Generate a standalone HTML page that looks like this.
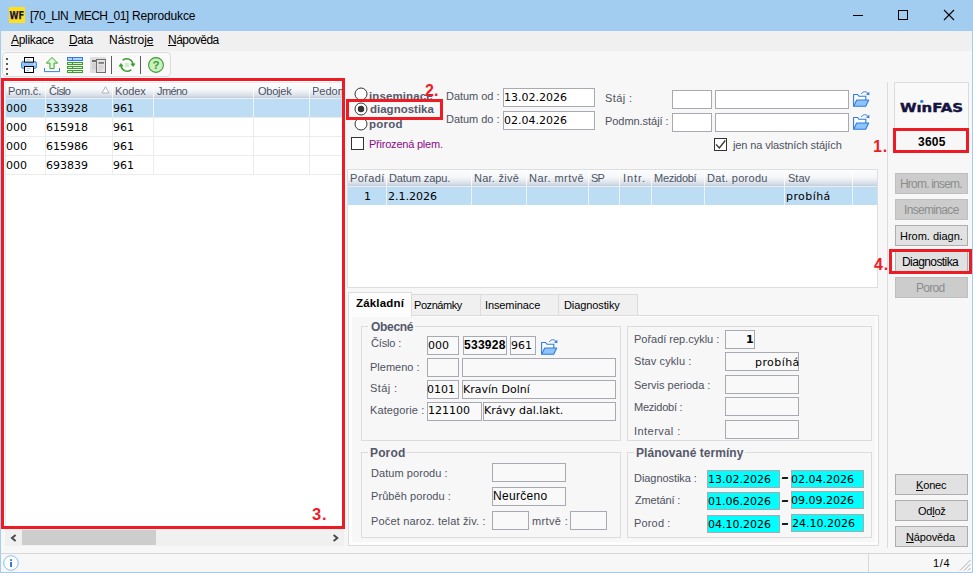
<!DOCTYPE html><html lang="cs"><head><meta charset="utf-8"><title>[70_LIN_MECH_01] Reprodukce</title><style>

html,body{margin:0;padding:0}
body{width:973px;height:573px;overflow:hidden;position:relative;background:#f7f7f7;font-family:"Liberation Sans",sans-serif}
.b{position:absolute;box-sizing:border-box}
.t{position:absolute;white-space:pre;line-height:1}
svg{position:absolute;overflow:visible}
u{text-decoration:underline;text-underline-offset:1px}

</style></head><body>
<div class="b" style="left:0px;top:0px;width:973px;height:31px;background:#a3cdf0;"></div>
<div class="b" style="left:0px;top:31px;width:1px;height:542px;background:#a3cdf0;"></div>
<div class="b" style="left:972px;top:31px;width:1px;height:542px;background:#a3cdf0;"></div>
<div class="b" style="left:0px;top:572px;width:973px;height:1px;background:#a3cdf0;"></div>
<div class="b" style="left:9px;top:7px;width:16px;height:16px;background:#ffe01a;"></div>
<svg style="left:9px;top:7px" width="16" height="16" viewBox="0 0 16 16"><text x="0.6" y="11.9" font-family="DejaVu Sans, Liberation Sans, sans-serif" font-weight="bold" font-size="10.2" fill="#1a1440" stroke="#1a1440" stroke-width="0.25" textLength="14.6" lengthAdjust="spacingAndGlyphs">WF</text></svg>
<span class="t" style="left:30px;top:9px;font:normal 12px 'Liberation Sans', sans-serif;color:#000;letter-spacing:-0.550px;">[70_LIN_MECH_01]</span>
<span class="t" style="left:132px;top:9px;font:normal 12px 'Liberation Sans', sans-serif;color:#000;letter-spacing:-0.140px;">Reprodukce</span>
<svg style="left:850px;top:5px" width="110" height="20" viewBox="850 5 110 20" fill="none" stroke="#000" stroke-width="1"><path d="M853 15.5h10"/><rect x="898.5" y="10.5" width="9" height="9"/><path d="M944 10l10 10M954 10l-10 10" stroke-width="1.1"/></svg>
<div class="b" style="left:1px;top:31px;width:971px;height:20px;background:#f0f0f0;"></div>
<span class="t" style="left:11px;top:33px;font:normal 12px 'Liberation Sans', sans-serif;color:#000;letter-spacing:-0.310px;"><u>A</u>plikace</span>
<span class="t" style="left:69px;top:33px;font:normal 12px 'Liberation Sans', sans-serif;color:#000;letter-spacing:-0.400px;"><u>D</u>ata</span>
<span class="t" style="left:109px;top:33px;font:normal 12px 'Liberation Sans', sans-serif;color:#000;letter-spacing:-0.030px;">Nástroj<u>e</u></span>
<span class="t" style="left:168px;top:33px;font:normal 12px 'Liberation Sans', sans-serif;color:#000;letter-spacing:-0.490px;"><u>N</u>ápověda</span>
<div class="b" style="left:2px;top:52px;width:169px;height:25px;background:#fafafa;border:1px solid #dcdcdc;border-radius:4px;"></div>
<div class="b" style="left:6px;top:58px;width:2px;height:2px;background:#5a5a5a;"></div>
<div class="b" style="left:6px;top:63px;width:2px;height:2px;background:#5a5a5a;"></div>
<div class="b" style="left:6px;top:68px;width:2px;height:2px;background:#5a5a5a;"></div>
<div class="b" style="left:6px;top:73px;width:2px;height:2px;background:#5a5a5a;"></div>
<svg style="left:21px;top:57px" width="16" height="16" viewBox="0 0 16 16">
<rect x="0.5" y="4.5" width="15" height="7" rx="1.8" fill="#8ec1fb" stroke="#3f86e6"/>
<rect x="3.5" y="0.5" width="9" height="4.6" fill="#fff" stroke="#000"/>
<rect x="3.5" y="9.5" width="9" height="6" fill="#fff" stroke="#000"/>
<path d="M5.5 2.8h3.5M5.5 11.7h4M5.5 13.6h2.5" stroke="#8ecbff" stroke-width="1"/>
<rect x="12.6" y="6.5" width="1.6" height="1.6" fill="#e8f3ff"/>
</svg>
<svg style="left:44px;top:57px" width="16" height="16" viewBox="0 0 16 16">
<path d="M8 0.5L13.7 6.1H10.1V11.6H5.9V6.1H2.3Z" fill="#dcf8d5" stroke="#3d9b30" stroke-width="0.95" stroke-linejoin="round"/>
<path d="M0.5 11v3.6h15V11" fill="none" stroke="#3a82dc" stroke-width="1"/>
</svg>
<svg style="left:67px;top:57px" width="16" height="16" viewBox="0 0 16 16">
<rect x="0.5" y="0.5" width="15" height="3" fill="#a9d5ff" stroke="#2f7be0"/>
<rect x="0.5" y="5.5" width="15" height="2" fill="#d9f6d2" stroke="#3d9b30"/>
<rect x="0.5" y="9.5" width="15" height="2" fill="#d9f6d2" stroke="#3d9b30"/>
<rect x="0.5" y="13.5" width="15" height="2" fill="#d9f6d2" stroke="#3d9b30"/>
<path d="M5.5 0.5v3" stroke="#2f7be0"/><path d="M5.5 5.5v2M5.5 9.5v2M5.5 13.5v2" stroke="#3d9b30"/>
</svg>
<svg style="left:90px;top:57px" width="16" height="16" viewBox="0 0 16 16">
<rect x="0" y="0" width="16" height="16" fill="#dedede"/>
<rect x="2" y="3" width="5" height="2" fill="#6e6e6e"/>
<path d="M2 7h4M2 9h4M2 11h4" stroke="#c4c4c4"/>
<rect x="6.5" y="2.5" width="9" height="13" fill="#e4e4e4" stroke="#707070"/>
<rect x="8.5" y="5" width="5.5" height="1.8" fill="#7a7a7a"/>
<path d="M8.5 9h5M8.5 11h5M8.5 13h3" stroke="#c8c8c8"/>
</svg>
<div class="b" style="left:111px;top:56px;width:1px;height:18px;background:#5c5c5c;"></div>
<svg style="left:119px;top:57px" width="16" height="16" viewBox="0 0 16 16" fill="none" stroke="#3d9b30" stroke-width="1.5" stroke-linecap="round">
<path d="M4.2 2.9A6.2 6.2 0 0 1 14 7.6"/>
<path d="M11.8 13.1A6.2 6.2 0 0 1 2 8.4"/>
<path d="M12.2 7.3l1.9 2.2 1.6-2.4z" fill="#3d9b30" stroke-width="0.8"/>
<path d="M3.8 8.7L1.9 6.5 0.3 8.9z" fill="#3d9b30" stroke-width="0.8"/>
<rect x="6" y="6" width="4" height="4" fill="#c9f0c0" stroke="none"/>
</svg>
<div class="b" style="left:140px;top:56px;width:1px;height:18px;background:#5c5c5c;"></div>
<svg style="left:148px;top:57px" width="16" height="16" viewBox="0 0 16 16">
<circle cx="8" cy="8" r="7.4" fill="#c9f0c0" stroke="#3d9b30" stroke-width="1.1"/>
<text x="8" y="12" text-anchor="middle" font-family="Liberation Sans, sans-serif" font-weight="bold" font-size="11.5" fill="#3d9b30">?</text>
</svg>
<div class="b" style="left:1px;top:78px;width:344px;height:451px;background:#ffffff;border:3px solid #ed1c24;"></div>
<div class="b" style="left:5px;top:82px;width:337px;height:1px;background:#e6eaee;"></div>
<div class="b" style="left:5px;top:82px;width:1px;height:444px;background:#e6eaee;"></div>
<div class="b" style="left:6px;top:83px;width:336px;height:15px;background:linear-gradient(#fdfdfe 0%,#f5f7f9 45%,#dce2ea 80%,#c3cedb 100%);"></div>
<div class="b" style="left:6px;top:98px;width:336px;height:1px;background:#e9edf1;"></div>
<div class="b" style="left:6px;top:99px;width:336px;height:18px;background:#bdddf5;"></div>
<div class="b" style="left:6px;top:117px;width:336px;height:1px;background:#ececec;"></div>
<div class="b" style="left:6px;top:136px;width:336px;height:1px;background:#ececec;"></div>
<div class="b" style="left:6px;top:155px;width:336px;height:1px;background:#ececec;"></div>
<div class="b" style="left:6px;top:174px;width:336px;height:1px;background:#ececec;"></div>
<div class="b" style="left:45px;top:83px;width:1px;height:16px;background:rgba(255,255,255,0.75);"></div>
<div class="b" style="left:45px;top:99px;width:1px;height:18px;background:#eaf4fb;"></div>
<div class="b" style="left:45px;top:117px;width:1px;height:58px;background:#ececec;"></div>
<div class="b" style="left:112px;top:83px;width:1px;height:16px;background:rgba(255,255,255,0.75);"></div>
<div class="b" style="left:112px;top:99px;width:1px;height:18px;background:#eaf4fb;"></div>
<div class="b" style="left:112px;top:117px;width:1px;height:58px;background:#ececec;"></div>
<div class="b" style="left:153px;top:83px;width:1px;height:16px;background:rgba(255,255,255,0.75);"></div>
<div class="b" style="left:153px;top:99px;width:1px;height:18px;background:#eaf4fb;"></div>
<div class="b" style="left:153px;top:117px;width:1px;height:58px;background:#ececec;"></div>
<div class="b" style="left:253px;top:83px;width:1px;height:16px;background:rgba(255,255,255,0.75);"></div>
<div class="b" style="left:253px;top:99px;width:1px;height:18px;background:#eaf4fb;"></div>
<div class="b" style="left:253px;top:117px;width:1px;height:58px;background:#ececec;"></div>
<div class="b" style="left:309px;top:83px;width:1px;height:16px;background:rgba(255,255,255,0.75);"></div>
<div class="b" style="left:309px;top:99px;width:1px;height:18px;background:#eaf4fb;"></div>
<div class="b" style="left:309px;top:117px;width:1px;height:58px;background:#ececec;"></div>
<span class="t" style="left:8px;top:85px;font:normal 11px 'Liberation Sans', sans-serif;color:#4a5263;letter-spacing:-0.200px;">Pom.č.</span>
<span class="t" style="left:49px;top:85px;font:normal 11px 'Liberation Sans', sans-serif;color:#4a5263;letter-spacing:-0.800px;">Číslo</span>
<span class="t" style="left:115px;top:85px;font:normal 11px 'Liberation Sans', sans-serif;color:#4a5263;letter-spacing:-0.100px;">Kodex</span>
<span class="t" style="left:157px;top:85px;font:normal 11px 'Liberation Sans', sans-serif;color:#4a5263;letter-spacing:-0.600px;">Jméno</span>
<span class="t" style="left:258px;top:85px;font:normal 11px 'Liberation Sans', sans-serif;color:#4a5263;letter-spacing:-0.240px;">Obojek</span>
<div class="b" style="left:313px;top:82px;width:29px;height:16px;overflow:hidden">
<span class="t" style="left:-1px;top:3px;font:normal 11px 'Liberation Sans', sans-serif;color:#4a5263;">Pedom</span>
</div>
<svg style="left:101px;top:86px" width="9" height="8" viewBox="0 0 9 8"><path d="M1 7L4.5 0.8 8 7Z" fill="#fff" stroke="#9aa3b0" stroke-width="0.8"/></svg>
<span class="t" style="left:6px;top:102px;font:normal 11px 'DejaVu Sans', 'Liberation Sans', sans-serif;color:#000;">000</span>
<span class="t" style="left:46px;top:102px;font:normal 11px 'DejaVu Sans', 'Liberation Sans', sans-serif;color:#000;">533928</span>
<span class="t" style="left:113px;top:102px;font:normal 11px 'DejaVu Sans', 'Liberation Sans', sans-serif;color:#000;">961</span>
<span class="t" style="left:6px;top:121px;font:normal 11px 'DejaVu Sans', 'Liberation Sans', sans-serif;color:#000;">000</span>
<span class="t" style="left:46px;top:121px;font:normal 11px 'DejaVu Sans', 'Liberation Sans', sans-serif;color:#000;">615918</span>
<span class="t" style="left:113px;top:121px;font:normal 11px 'DejaVu Sans', 'Liberation Sans', sans-serif;color:#000;">961</span>
<span class="t" style="left:6px;top:140px;font:normal 11px 'DejaVu Sans', 'Liberation Sans', sans-serif;color:#000;">000</span>
<span class="t" style="left:46px;top:140px;font:normal 11px 'DejaVu Sans', 'Liberation Sans', sans-serif;color:#000;">615986</span>
<span class="t" style="left:113px;top:140px;font:normal 11px 'DejaVu Sans', 'Liberation Sans', sans-serif;color:#000;">961</span>
<span class="t" style="left:6px;top:159px;font:normal 11px 'DejaVu Sans', 'Liberation Sans', sans-serif;color:#000;">000</span>
<span class="t" style="left:46px;top:159px;font:normal 11px 'DejaVu Sans', 'Liberation Sans', sans-serif;color:#000;">693839</span>
<span class="t" style="left:113px;top:159px;font:normal 11px 'DejaVu Sans', 'Liberation Sans', sans-serif;color:#000;">961</span>
<span class="t" style="left:312px;top:505px;font:bold 16.5px 'Liberation Sans', sans-serif;color:#ed1c24;letter-spacing:0.900px;">3.</span>
<div class="b" style="left:5px;top:529px;width:339px;height:17px;background:#f0f0f0;"></div>
<div class="b" style="left:22px;top:530px;width:134px;height:15px;background:#cdcdcd;"></div>
<svg style="left:9.5px;top:532.5px" width="8" height="10" viewBox="0 0 8 10" fill="none" stroke="#484848" stroke-width="1.9"><path d="M5.6 2L1.9 5l3.7 3"/></svg>
<svg style="left:332px;top:532.5px" width="8" height="10" viewBox="0 0 8 10" fill="none" stroke="#484848" stroke-width="1.9"><path d="M1.6 2L5.3 5 1.6 8"/></svg>
<div class="b" style="left:1px;top:553px;width:971px;height:1px;background:#d7d7d7;"></div>
<div class="b" style="left:868px;top:554px;width:1px;height:18px;background:#d7d7d7;"></div>
<svg style="left:3px;top:555px" width="16" height="16" viewBox="0 0 16 16">
<circle cx="8" cy="8" r="7.3" fill="#fbfdff" stroke="#8cc0f2" stroke-width="1"/>
<rect x="7.2" y="7" width="1.7" height="5" fill="#1c63c8"/><rect x="7.2" y="4.2" width="1.7" height="1.7" fill="#1c63c8"/>
</svg>
<span class="t" style="left:933px;top:557px;font:normal 11px 'Liberation Sans', sans-serif;color:#000;letter-spacing:0.700px;">1/4</span>
<svg style="left:959px;top:559px" width="12" height="12" viewBox="0 0 12 12" stroke="#b0b0b0" stroke-width="1"><path d="M11.5 1L1 11.5M11.5 5L5 11.5M11.5 9L9 11.5"/></svg>
<span class="t" style="left:369px;top:90px;font:bold 11.5px 'Liberation Sans', sans-serif;color:#55586a;letter-spacing:0.110px;">inseminace</span>
<span class="t" style="left:369px;top:118px;font:bold 11.5px 'Liberation Sans', sans-serif;color:#55586a;letter-spacing:0.250px;">porod</span>
<svg style="left:353.5px;top:87.3px" width="14" height="14" viewBox="0 0 14 14"><circle cx="7" cy="7" r="6" fill="#fff" stroke="#333" stroke-width="1"/></svg>
<svg style="left:353.5px;top:116.8px" width="14" height="14" viewBox="0 0 14 14"><circle cx="7" cy="7" r="6" fill="#fff" stroke="#333" stroke-width="1"/></svg>
<div class="b" style="left:346px;top:99px;width:97px;height:21px;background:#f7f7f7;border:3px solid #ed1c24;"></div>
<svg style="left:353.5px;top:102.4px" width="14" height="14" viewBox="0 0 14 14"><circle cx="7" cy="7" r="6" fill="#fff" stroke="#333" stroke-width="1"/><circle cx="7" cy="7" r="3.2" fill="#333"/></svg>
<span class="t" style="left:370px;top:103px;font:bold 11.5px 'Liberation Sans', sans-serif;color:#55586a;">diagnostika</span>
<span class="t" style="left:425px;top:82px;font:bold 16px 'Liberation Sans', sans-serif;color:#ed1c24;">2.</span>
<div class="b" style="left:351px;top:137px;width:13px;height:13px;background:#fff;border:1px solid #333;"></div>
<span class="t" style="left:369px;top:138px;font:normal 11px 'Liberation Sans', sans-serif;color:#8a0a8a;letter-spacing:-0.220px;">Přirozená plem.</span>
<span class="t" style="left:446px;top:90px;font:normal 11px 'Liberation Sans', sans-serif;color:#4e5160;letter-spacing:-0.040px;">Datum od :</span>
<span class="t" style="left:446px;top:113px;font:normal 11px 'Liberation Sans', sans-serif;color:#4e5160;letter-spacing:-0.040px;">Datum do :</span>
<div class="b" style="left:503px;top:88px;width:92px;height:19px;background:#fff;border:1px solid #a7aab3;"></div>
<div class="b" style="left:503px;top:111px;width:92px;height:19px;background:#fff;border:1px solid #a7aab3;"></div>
<span class="t" style="left:504px;top:91px;font:normal 11px 'DejaVu Sans', 'Liberation Sans', sans-serif;color:#000;">13.02.2026</span>
<span class="t" style="left:504px;top:114px;font:normal 11px 'DejaVu Sans', 'Liberation Sans', sans-serif;color:#000;">02.04.2026</span>
<span class="t" style="left:605px;top:92px;font:normal 11px 'Liberation Sans', sans-serif;color:#4e5160;letter-spacing:0.400px;">Stáj :</span>
<span class="t" style="left:605px;top:115px;font:normal 11px 'Liberation Sans', sans-serif;color:#4e5160;letter-spacing:-0.050px;">Podmn.stájí :</span>
<div class="b" style="left:672px;top:90px;width:40px;height:19px;background:#fff;border:1px solid #a7aab3;"></div>
<div class="b" style="left:715px;top:90px;width:134px;height:19px;background:#fff;border:1px solid #a7aab3;"></div>
<div class="b" style="left:672px;top:113px;width:40px;height:19px;background:#fff;border:1px solid #a7aab3;"></div>
<div class="b" style="left:715px;top:113px;width:134px;height:19px;background:#fff;border:1px solid #a7aab3;"></div>
<svg style="left:853px;top:91px" width="17" height="16" viewBox="0 0 17 16">
<path d="M0.6 15.2V3.5h4l1.4 1.8h6.8v3.8" fill="#fdfeff" stroke="#2f7be0" stroke-width="1.1" stroke-linejoin="round"/>
<path d="M0.7 15.3L3.7 9h12l-3 6.3z" fill="#8ec4fc" stroke="#2f7be0" stroke-width="1.1" stroke-linejoin="round"/>
<path d="M8.3 3c1.5-2.8 4.8-3 6.6-0.7" fill="none" stroke="#2f7be0" stroke-width="1"/>
<path d="M16.3 0.7v3.6l-3.5-0.9z" fill="#2f7be0"/>
</svg>
<svg style="left:853px;top:114px" width="17" height="16" viewBox="0 0 17 16">
<path d="M0.6 15.2V3.5h4l1.4 1.8h6.8v3.8" fill="#fdfeff" stroke="#2f7be0" stroke-width="1.1" stroke-linejoin="round"/>
<path d="M0.7 15.3L3.7 9h12l-3 6.3z" fill="#8ec4fc" stroke="#2f7be0" stroke-width="1.1" stroke-linejoin="round"/>
<path d="M8.3 3c1.5-2.8 4.8-3 6.6-0.7" fill="none" stroke="#2f7be0" stroke-width="1"/>
<path d="M16.3 0.7v3.6l-3.5-0.9z" fill="#2f7be0"/>
</svg>
<div class="b" style="left:714px;top:138px;width:13px;height:13px;background:#fff;border:1px solid #333;"></div>
<svg style="left:714px;top:138px" width="13" height="13" viewBox="0 0 13 13" fill="none" stroke="#333" stroke-width="1.3"><path d="M2 6.4l3.3 3.5 6-7.4"/></svg>
<span class="t" style="left:733px;top:139px;font:normal 11px 'Liberation Sans', sans-serif;color:#4e5160;letter-spacing:-0.110px;">jen na vlastních stájích</span>
<div class="b" style="left:347px;top:169px;width:531px;height:119px;background:#fff;border:1px solid #dcdee2;"></div>
<div class="b" style="left:348px;top:170px;width:529px;height:16px;background:linear-gradient(#fdfdfe 0%,#f5f7f9 45%,#dce2ea 80%,#c3cedb 100%);"></div>
<div class="b" style="left:348px;top:186px;width:529px;height:1px;background:#e9edf1;"></div>
<div class="b" style="left:348px;top:187px;width:529px;height:18px;background:#bdddf5;"></div>
<div class="b" style="left:386px;top:170px;width:1px;height:17px;background:rgba(255,255,255,0.75);"></div>
<div class="b" style="left:386px;top:187px;width:1px;height:18px;background:#eaf4fb;"></div>
<div class="b" style="left:471px;top:170px;width:1px;height:17px;background:rgba(255,255,255,0.75);"></div>
<div class="b" style="left:471px;top:187px;width:1px;height:18px;background:#eaf4fb;"></div>
<div class="b" style="left:526px;top:170px;width:1px;height:17px;background:rgba(255,255,255,0.75);"></div>
<div class="b" style="left:526px;top:187px;width:1px;height:18px;background:#eaf4fb;"></div>
<div class="b" style="left:588px;top:170px;width:1px;height:17px;background:rgba(255,255,255,0.75);"></div>
<div class="b" style="left:588px;top:187px;width:1px;height:18px;background:#eaf4fb;"></div>
<div class="b" style="left:619px;top:170px;width:1px;height:17px;background:rgba(255,255,255,0.75);"></div>
<div class="b" style="left:619px;top:187px;width:1px;height:18px;background:#eaf4fb;"></div>
<div class="b" style="left:651px;top:170px;width:1px;height:17px;background:rgba(255,255,255,0.75);"></div>
<div class="b" style="left:651px;top:187px;width:1px;height:18px;background:#eaf4fb;"></div>
<div class="b" style="left:704px;top:170px;width:1px;height:17px;background:rgba(255,255,255,0.75);"></div>
<div class="b" style="left:704px;top:187px;width:1px;height:18px;background:#eaf4fb;"></div>
<div class="b" style="left:784px;top:170px;width:1px;height:17px;background:rgba(255,255,255,0.75);"></div>
<div class="b" style="left:784px;top:187px;width:1px;height:18px;background:#eaf4fb;"></div>
<div class="b" style="left:852px;top:170px;width:1px;height:17px;background:rgba(255,255,255,0.75);"></div>
<div class="b" style="left:852px;top:187px;width:1px;height:18px;background:#eaf4fb;"></div>
<div class="b" style="left:348px;top:170px;width:38px;height:16px;overflow:hidden">
<span class="t" style="left:2px;top:2px;font:normal 11px 'Liberation Sans', sans-serif;color:#4a5263;letter-spacing:0.400px;">Pořadí</span>
</div>
<span class="t" style="left:389px;top:172px;font:normal 11px 'Liberation Sans', sans-serif;color:#4a5263;letter-spacing:-0.100px;">Datum zapu.</span>
<span class="t" style="left:474px;top:172px;font:normal 11px 'Liberation Sans', sans-serif;color:#4a5263;letter-spacing:0.250px;">Nar. živě</span>
<span class="t" style="left:529px;top:172px;font:normal 11px 'Liberation Sans', sans-serif;color:#4a5263;letter-spacing:0.440px;">Nar. mrtvě</span>
<span class="t" style="left:591px;top:172px;font:normal 11px 'Liberation Sans', sans-serif;color:#4a5263;letter-spacing:-0.800px;">SP</span>
<span class="t" style="left:623px;top:172px;font:normal 11px 'Liberation Sans', sans-serif;color:#4a5263;letter-spacing:0.900px;">Intr.</span>
<span class="t" style="left:654px;top:172px;font:normal 11px 'Liberation Sans', sans-serif;color:#4a5263;letter-spacing:-0.280px;">Mezidobí</span>
<span class="t" style="left:707px;top:172px;font:normal 11px 'Liberation Sans', sans-serif;color:#4a5263;letter-spacing:0.300px;">Dat. porodu</span>
<span class="t" style="left:788px;top:172px;font:normal 11px 'Liberation Sans', sans-serif;color:#4a5263;">Stav</span>
<span class="t" style="left:364px;top:190px;font:normal 11px 'DejaVu Sans', 'Liberation Sans', sans-serif;color:#000;">1</span>
<span class="t" style="left:388px;top:190px;font:normal 11px 'DejaVu Sans', 'Liberation Sans', sans-serif;color:#000;">2.1.2026</span>
<span class="t" style="left:786px;top:190px;font:normal 11px 'DejaVu Sans', 'Liberation Sans', sans-serif;color:#000;letter-spacing:0.430px;">probíhá</span>
<div class="b" style="left:348px;top:315px;width:531px;height:231px;background:#fdfdfd;border:1px solid #dcdcdc;"></div>
<div class="b" style="left:352px;top:317px;width:523px;height:225px;background:#f7f7f7;"></div>
<div class="b" style="left:411px;top:294px;width:227px;height:22px;background:#f0f0f0;border:1px solid #dcdcdc;"></div>
<div class="b" style="left:480px;top:295px;width:1px;height:20px;background:#dcdcdc;"></div>
<div class="b" style="left:558px;top:295px;width:1px;height:20px;background:#dcdcdc;"></div>
<div class="b" style="left:348px;top:292px;width:64px;height:25px;background:#fdfdfd;border:1px solid #dcdcdc;border-bottom:none;"></div>
<span class="t" style="left:356px;top:297px;font:bold 11.5px 'Liberation Sans', sans-serif;color:#000;letter-spacing:0.170px;">Základní</span>
<span class="t" style="left:414px;top:299px;font:normal 11px 'Liberation Sans', sans-serif;color:#000;letter-spacing:-0.430px;">Poznámky</span>
<span class="t" style="left:485px;top:299px;font:normal 11px 'Liberation Sans', sans-serif;color:#000;letter-spacing:-0.110px;">Inseminace</span>
<span class="t" style="left:564px;top:299px;font:normal 11px 'Liberation Sans', sans-serif;color:#000;letter-spacing:-0.100px;">Diagnostiky</span>
<div class="b" style="left:361px;top:326px;width:260px;height:115px;border:1px solid #dcdcdc;"></div>
<div class="b" style="left:368px;top:324px;width:47.2px;height:5px;background:#f7f7f7;"></div>
<span class="t" style="left:371px;top:320px;font:bold 12px 'Liberation Sans', sans-serif;color:#55586a;letter-spacing:-0.320px;">Obecné</span>
<span class="t" style="left:371px;top:337px;font:normal 11px 'Liberation Sans', sans-serif;color:#4e5160;letter-spacing:-0.160px;">Číslo :</span>
<span class="t" style="left:370px;top:361px;font:normal 11px 'Liberation Sans', sans-serif;color:#4e5160;">Plemeno :</span>
<span class="t" style="left:370px;top:382px;font:normal 11px 'Liberation Sans', sans-serif;color:#4e5160;letter-spacing:0.400px;">Stáj :</span>
<span class="t" style="left:370px;top:404px;font:normal 11px 'Liberation Sans', sans-serif;color:#4e5160;letter-spacing:0.100px;">Kategorie :</span>
<div class="b" style="left:427px;top:336px;width:32px;height:19px;background:#f9f9f9;border:1px solid #a7aab3;"></div>
<div class="b" style="left:463px;top:336px;width:44px;height:19px;background:#f9f9f9;border:1px solid #a7aab3;"></div>
<div class="b" style="left:510px;top:336px;width:26px;height:19px;background:#f9f9f9;border:1px solid #a7aab3;"></div>
<span class="t" style="left:428px;top:339px;font:normal 11px 'DejaVu Sans', 'Liberation Sans', sans-serif;color:#000;">000</span>
<span class="t" style="left:464px;top:338px;font:bold 12px 'Liberation Sans', sans-serif;color:#000;letter-spacing:0.280px;">533928</span>
<span class="t" style="left:511px;top:339px;font:normal 11px 'DejaVu Sans', 'Liberation Sans', sans-serif;color:#000;">961</span>
<svg style="left:540.5px;top:338.5px" width="17" height="16" viewBox="0 0 17 16">
<path d="M0.6 15.2V3.5h4l1.4 1.8h6.8v3.8" fill="#fdfeff" stroke="#2f7be0" stroke-width="1.1" stroke-linejoin="round"/>
<path d="M0.7 15.3L3.7 9h12l-3 6.3z" fill="#8ec4fc" stroke="#2f7be0" stroke-width="1.1" stroke-linejoin="round"/>
<path d="M8.3 3c1.5-2.8 4.8-3 6.6-0.7" fill="none" stroke="#2f7be0" stroke-width="1"/>
<path d="M16.3 0.7v3.6l-3.5-0.9z" fill="#2f7be0"/>
</svg>
<div class="b" style="left:427px;top:358px;width:32px;height:19px;background:#f9f9f9;border:1px solid #a7aab3;"></div>
<div class="b" style="left:462px;top:358px;width:154px;height:19px;background:#f9f9f9;border:1px solid #a7aab3;"></div>
<div class="b" style="left:427px;top:380px;width:32px;height:19px;background:#f9f9f9;border:1px solid #a7aab3;"></div>
<div class="b" style="left:462px;top:380px;width:154px;height:19px;background:#f9f9f9;border:1px solid #a7aab3;"></div>
<span class="t" style="left:427px;top:383px;font:normal 11px 'DejaVu Sans', 'Liberation Sans', sans-serif;color:#000;">0101</span>
<span class="t" style="left:463px;top:383px;font:normal 11px 'DejaVu Sans', 'Liberation Sans', sans-serif;color:#000;">Kravín Dolní</span>
<div class="b" style="left:427px;top:402px;width:55px;height:19px;background:#f9f9f9;border:1px solid #a7aab3;"></div>
<div class="b" style="left:483px;top:402px;width:133px;height:19px;background:#f9f9f9;border:1px solid #a7aab3;"></div>
<span class="t" style="left:428px;top:404px;font:normal 11px 'DejaVu Sans', 'Liberation Sans', sans-serif;color:#000;">121100</span>
<span class="t" style="left:484px;top:404px;font:normal 11px 'DejaVu Sans', 'Liberation Sans', sans-serif;color:#000;">Krávy dal.lakt.</span>
<div class="b" style="left:627px;top:326px;width:245px;height:115px;border:1px solid #dcdcdc;"></div>
<span class="t" style="left:634px;top:333px;font:normal 11px 'Liberation Sans', sans-serif;color:#4e5160;letter-spacing:-0.020px;">Pořadí rep.cyklu :</span>
<span class="t" style="left:634px;top:355px;font:normal 11px 'Liberation Sans', sans-serif;color:#4e5160;letter-spacing:0.100px;">Stav cyklu :</span>
<span class="t" style="left:634px;top:379px;font:normal 11px 'Liberation Sans', sans-serif;color:#4e5160;">Servis perioda :</span>
<span class="t" style="left:634px;top:401px;font:normal 11px 'Liberation Sans', sans-serif;color:#4e5160;letter-spacing:-0.230px;">Mezidobí :</span>
<span class="t" style="left:634px;top:425px;font:normal 11px 'Liberation Sans', sans-serif;color:#4e5160;letter-spacing:0.450px;">Interval :</span>
<div class="b" style="left:725px;top:330px;width:30px;height:19px;background:#f9f9f9;border:1px solid #a7aab3;"></div>
<div class="b" style="left:725px;top:352px;width:74px;height:19px;background:#f9f9f9;border:1px solid #a7aab3;"></div>
<div class="b" style="left:725px;top:375px;width:74px;height:19px;background:#f9f9f9;border:1px solid #a7aab3;"></div>
<div class="b" style="left:725px;top:397px;width:74px;height:19px;background:#f9f9f9;border:1px solid #a7aab3;"></div>
<div class="b" style="left:725px;top:420px;width:74px;height:19px;background:#f9f9f9;border:1px solid #a7aab3;"></div>
<span class="t" style="left:746px;top:333px;font:bold 11px 'DejaVu Sans', 'Liberation Sans', sans-serif;color:#000;">1</span>
<span class="t" style="left:755px;top:356px;font:normal 11px 'DejaVu Sans', 'Liberation Sans', sans-serif;color:#000;letter-spacing:0.430px;">probíhá</span>
<div class="b" style="left:361px;top:452px;width:260px;height:86px;border:1px solid #dcdcdc;"></div>
<div class="b" style="left:368px;top:450px;width:38.3px;height:5px;background:#f7f7f7;"></div>
<span class="t" style="left:370px;top:446px;font:bold 12px 'Liberation Sans', sans-serif;color:#55586a;letter-spacing:0.140px;">Porod</span>
<span class="t" style="left:371px;top:467px;font:normal 11px 'Liberation Sans', sans-serif;color:#4e5160;letter-spacing:0.060px;">Datum porodu :</span>
<span class="t" style="left:371px;top:490px;font:normal 11px 'Liberation Sans', sans-serif;color:#4e5160;letter-spacing:0.070px;">Průběh porodu :</span>
<span class="t" style="left:371px;top:515px;font:normal 11px 'Liberation Sans', sans-serif;color:#4e5160;letter-spacing:0.170px;">Počet naroz. telat živ. :</span>
<div class="b" style="left:492px;top:463px;width:74px;height:19px;background:#f9f9f9;border:1px solid #a7aab3;"></div>
<div class="b" style="left:492px;top:487px;width:74px;height:19px;background:#f9f9f9;border:1px solid #a7aab3;"></div>
<span class="t" style="left:493px;top:489px;font:normal 12px 'Liberation Sans', sans-serif;color:#000;letter-spacing:0.320px;">Neurčeno</span>
<div class="b" style="left:492px;top:511px;width:37px;height:19px;background:#f9f9f9;border:1px solid #a7aab3;"></div>
<span class="t" style="left:532px;top:515px;font:normal 11px 'Liberation Sans', sans-serif;color:#4e5160;letter-spacing:0.360px;">mrtvě :</span>
<div class="b" style="left:570px;top:511px;width:37px;height:19px;background:#f9f9f9;border:1px solid #a7aab3;"></div>
<div class="b" style="left:627px;top:452px;width:245px;height:86px;border:1px solid #dcdcdc;"></div>
<div class="b" style="left:634px;top:450px;width:111.3px;height:5px;background:#f7f7f7;"></div>
<span class="t" style="left:636px;top:446px;font:bold 12px 'Liberation Sans', sans-serif;color:#55586a;letter-spacing:0.040px;">Plánované termíny</span>
<span class="t" style="left:634px;top:472px;font:normal 11px 'Liberation Sans', sans-serif;color:#4e5160;letter-spacing:-0.060px;">Diagnostika :</span>
<span class="t" style="left:635px;top:494px;font:normal 11px 'Liberation Sans', sans-serif;color:#4e5160;letter-spacing:-0.130px;">Zmetání :</span>
<span class="t" style="left:634px;top:517px;font:normal 11px 'Liberation Sans', sans-serif;color:#4e5160;letter-spacing:0.160px;">Porod :</span>
<div class="b" style="left:707px;top:470px;width:73px;height:18px;background:#00ffff;border:1px solid #b0a8a8;"></div>
<div class="b" style="left:791px;top:470px;width:73px;height:18px;background:#00ffff;border:1px solid #b0a8a8;"></div>
<div class="b" style="left:707px;top:492px;width:73px;height:18px;background:#00ffff;border:1px solid #b0a8a8;"></div>
<div class="b" style="left:791px;top:491px;width:73px;height:18px;background:#00ffff;border:1px solid #b0a8a8;"></div>
<div class="b" style="left:707px;top:515px;width:73px;height:18px;background:#00ffff;border:1px solid #b0a8a8;"></div>
<div class="b" style="left:791px;top:514px;width:73px;height:18px;background:#00ffff;border:1px solid #b0a8a8;"></div>
<span class="t" style="left:708px;top:473px;font:normal 11px 'DejaVu Sans', 'Liberation Sans', sans-serif;color:#000;">13.02.2026</span>
<span class="t" style="left:791px;top:473px;font:normal 11px 'DejaVu Sans', 'Liberation Sans', sans-serif;color:#000;">02.04.2026</span>
<span class="t" style="left:708px;top:495px;font:normal 11px 'DejaVu Sans', 'Liberation Sans', sans-serif;color:#000;">01.06.2026</span>
<span class="t" style="left:791px;top:494px;font:normal 11px 'DejaVu Sans', 'Liberation Sans', sans-serif;color:#000;">09.09.2026</span>
<span class="t" style="left:708px;top:518px;font:normal 11px 'DejaVu Sans', 'Liberation Sans', sans-serif;color:#000;">04.10.2026</span>
<span class="t" style="left:792px;top:517px;font:normal 11px 'DejaVu Sans', 'Liberation Sans', sans-serif;color:#000;">24.10.2026</span>
<div class="b" style="left:782px;top:477px;width:6px;height:2px;background:#1c1c1c;transform:skewX(-15deg);"></div>
<div class="b" style="left:782px;top:500px;width:6px;height:2px;background:#1c1c1c;transform:skewX(-15deg);"></div>
<div class="b" style="left:782px;top:523px;width:6px;height:2px;background:#1c1c1c;transform:skewX(-15deg);"></div>
<div class="b" style="left:887px;top:82px;width:1px;height:466px;background:#dcdcdc;"></div>
<div class="b" style="left:894px;top:82px;width:75px;height:60px;background:#f9f9f9;border:1px solid #dcdcdc;"></div>
<svg style="left:899px;top:98px" width="66" height="17" viewBox="0 0 66 17"><text x="0.9" y="13.6" font-family="DejaVu Sans, Liberation Sans, sans-serif" font-weight="bold" font-size="13" fill="#15133f" stroke="#15133f" stroke-width="0.45" textLength="63.2" lengthAdjust="spacingAndGlyphs">WınFAS</text><circle cx="22.8" cy="3.4" r="1.7" fill="#2f86e0"/></svg>
<div class="b" style="left:893px;top:128px;width:76px;height:25px;background:#f7f7f7;border:3px solid #ed1c24;"></div>
<span class="t" style="left:918px;top:135px;font:bold 12px 'Liberation Sans', sans-serif;color:#000;letter-spacing:0.260px;">3605</span>
<span class="t" style="left:873px;top:138px;font:bold 16px 'Liberation Sans', sans-serif;color:#ed1c24;letter-spacing:0.800px;">1.</span>
<div class="b" style="left:895px;top:173px;width:73px;height:21px;background:#cccccc;border:1px solid #bfbfbf;"></div>
<span class="t" style="left:900px;top:177px;font:normal 12px 'Liberation Sans', sans-serif;color:#8c8c8c;letter-spacing:-0.800px;">Hrom. insem.</span>
<div class="b" style="left:895px;top:199px;width:73px;height:21px;background:#cccccc;border:1px solid #bfbfbf;"></div>
<span class="t" style="left:904px;top:203px;font:normal 12px 'Liberation Sans', sans-serif;color:#8c8c8c;letter-spacing:-0.670px;">Inseminace</span>
<div class="b" style="left:895px;top:225px;width:73px;height:21px;background:#e1e1e1;border:1px solid #adadad;"></div>
<span class="t" style="left:900px;top:230px;font:normal 11px 'Liberation Sans', sans-serif;color:#000;letter-spacing:-0.010px;">Hrom. diagn.</span>
<div class="b" style="left:895px;top:251px;width:73px;height:21px;background:#e1e1e1;border:1px solid #adadad;"></div>
<span class="t" style="left:902px;top:255px;font:normal 12px 'Liberation Sans', sans-serif;color:#000;letter-spacing:-0.600px;">Diagnostika</span>
<div class="b" style="left:889px;top:249px;width:83px;height:25px;border:3px solid #ed1c24;"></div>
<div class="b" style="left:895px;top:277px;width:73px;height:21px;background:#cccccc;border:1px solid #bfbfbf;"></div>
<span class="t" style="left:916px;top:281px;font:normal 12px 'Liberation Sans', sans-serif;color:#8c8c8c;letter-spacing:-0.700px;">Porod</span>
<span class="t" style="left:874px;top:256px;font:bold 16px 'Liberation Sans', sans-serif;color:#ed1c24;letter-spacing:0.900px;">4.</span>
<div class="b" style="left:895px;top:474px;width:73px;height:21px;background:#e1e1e1;border:1px solid #adadad;"></div>
<span class="t" style="left:916px;top:479px;font:normal 11px 'Liberation Sans', sans-serif;color:#000;letter-spacing:-0.150px;"><u>K</u>onec</span>
<div class="b" style="left:895px;top:500px;width:73px;height:21px;background:#e1e1e1;border:1px solid #adadad;"></div>
<span class="t" style="left:918px;top:505px;font:normal 11px 'Liberation Sans', sans-serif;color:#000;letter-spacing:-0.240px;">Od<u>l</u>ož</span>
<div class="b" style="left:895px;top:526px;width:73px;height:21px;background:#e1e1e1;border:1px solid #adadad;"></div>
<span class="t" style="left:906px;top:531px;font:normal 11px 'Liberation Sans', sans-serif;color:#000;letter-spacing:-0.140px;"><u>N</u>ápověda</span>
</body></html>
